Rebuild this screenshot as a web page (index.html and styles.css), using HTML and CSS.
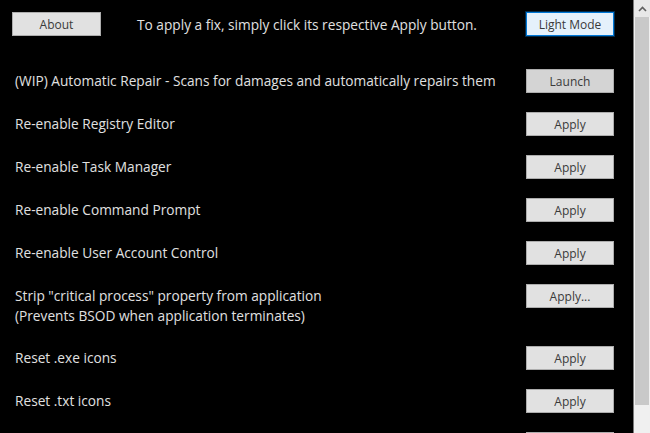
FILE: index.html
```html
<!DOCTYPE html>
<html>
<head>
<meta charset="utf-8">
<link rel="stylesheet" href="styles.css">
</head>
<body>
<div class="window">
  <div class="content">
    <div class="header">
      <button class="btn about">About</button>
      <div class="message">To apply a fix, simply click its respective Apply button.</div>
      <button class="btn light">Light Mode</button>
    </div>
    <div class="rows">
      <div class="row"><div class="label">(WIP) Automatic Repair - Scans for damages and automatically repairs them</div><button class="btn launch">Launch</button></div>
      <div class="row"><div class="label">Re-enable Registry Editor</div><button class="btn">Apply</button></div>
      <div class="row"><div class="label">Re-enable Task Manager</div><button class="btn">Apply</button></div>
      <div class="row"><div class="label">Re-enable Command Prompt</div><button class="btn">Apply</button></div>
      <div class="row"><div class="label">Re-enable User Account Control</div><button class="btn">Apply</button></div>
      <div class="row"><div class="label two">Strip "critical process" property from application<br>(Prevents BSOD when application terminates)</div><button class="btn">Apply...</button></div>
      <div class="row"><div class="label">Reset .exe icons</div><button class="btn">Apply</button></div>
      <div class="row"><div class="label">Reset .txt icons</div><button class="btn">Apply</button></div>
      <div class="row"><div class="label"></div><button class="btn"></button></div>
    </div>
  </div>
  <div class="scrollbar">
    <div class="arrow">
      <svg width="9" height="6" viewBox="0 0 9 6"><path d="M1 5 L4.5 1.5 L8 5" fill="none" stroke="#606060" stroke-width="1.6"/></svg>
    </div>
    <div class="thumb"></div>
    <div class="track"></div>
  </div>
</div>
</body>
</html>
```
FILE: styles.css
```css
html, body {
  margin: 0;
  padding: 0;
  background: #000;
  overflow: hidden;
}
.window {
  display: flex;
  width: 650px;
  height: 433px;
  overflow: hidden;
  font-family: "Open Sans", "Noto Sans", sans-serif;
  font-size: 13.7px;
  color: #e0e0e0;
}
.content {
  flex: 1;
  padding: 12px 19px 0 0;
  overflow: hidden;
}
.header {
  display: flex;
  align-items: center;
  height: 24px;
}
.btn {
  width: 88px;
  height: 24px;
  margin: 0;
  padding: 0;
  background: #e1e1e1;
  border: 1px solid #adadad;
  font-family: "Open Sans", "Noto Sans", sans-serif;
  font-size: 12px;
  color: #3a3a3a;
  flex: none;
}
.about {
  margin-left: 12px;
  width: 89px;
}
.message {
  margin-left: 36px;
  white-space: nowrap;
}
.light {
  margin-left: auto;
  background: #e5f1fb;
  border: 1px solid #0078d7;
  box-shadow: 0 0 0 1px rgba(0,120,215,0.35);
}
.rows {
  display: flex;
  flex-direction: column;
  margin-top: 33px;
}
.row {
  display: flex;
  align-items: flex-start;
  justify-content: space-between;
  height: 24px;
  margin-bottom: 19px;
}
.row:has(.two) {
  height: 43px;
}
.label {
  padding: 2px 0 0 15px;
  line-height: 20px;
  white-space: nowrap;
}
.launch {
  background: #d4d4d4;
}
.scrollbar {
  width: 16px;
  flex: none;
  border-left: 1px solid #7a7a7a;
  display: flex;
  flex-direction: column;
  background: #f0f0f0;
}
.arrow {
  height: 17px;
  background: #e8e8e8;
  display: flex;
  align-items: center;
  justify-content: center;
}
.thumb {
  height: 388px;
  background: #c9c9c9;
  margin: 0 1px;
}
.track {
  flex: 1;
  background: #f0f0f0;
}
```
